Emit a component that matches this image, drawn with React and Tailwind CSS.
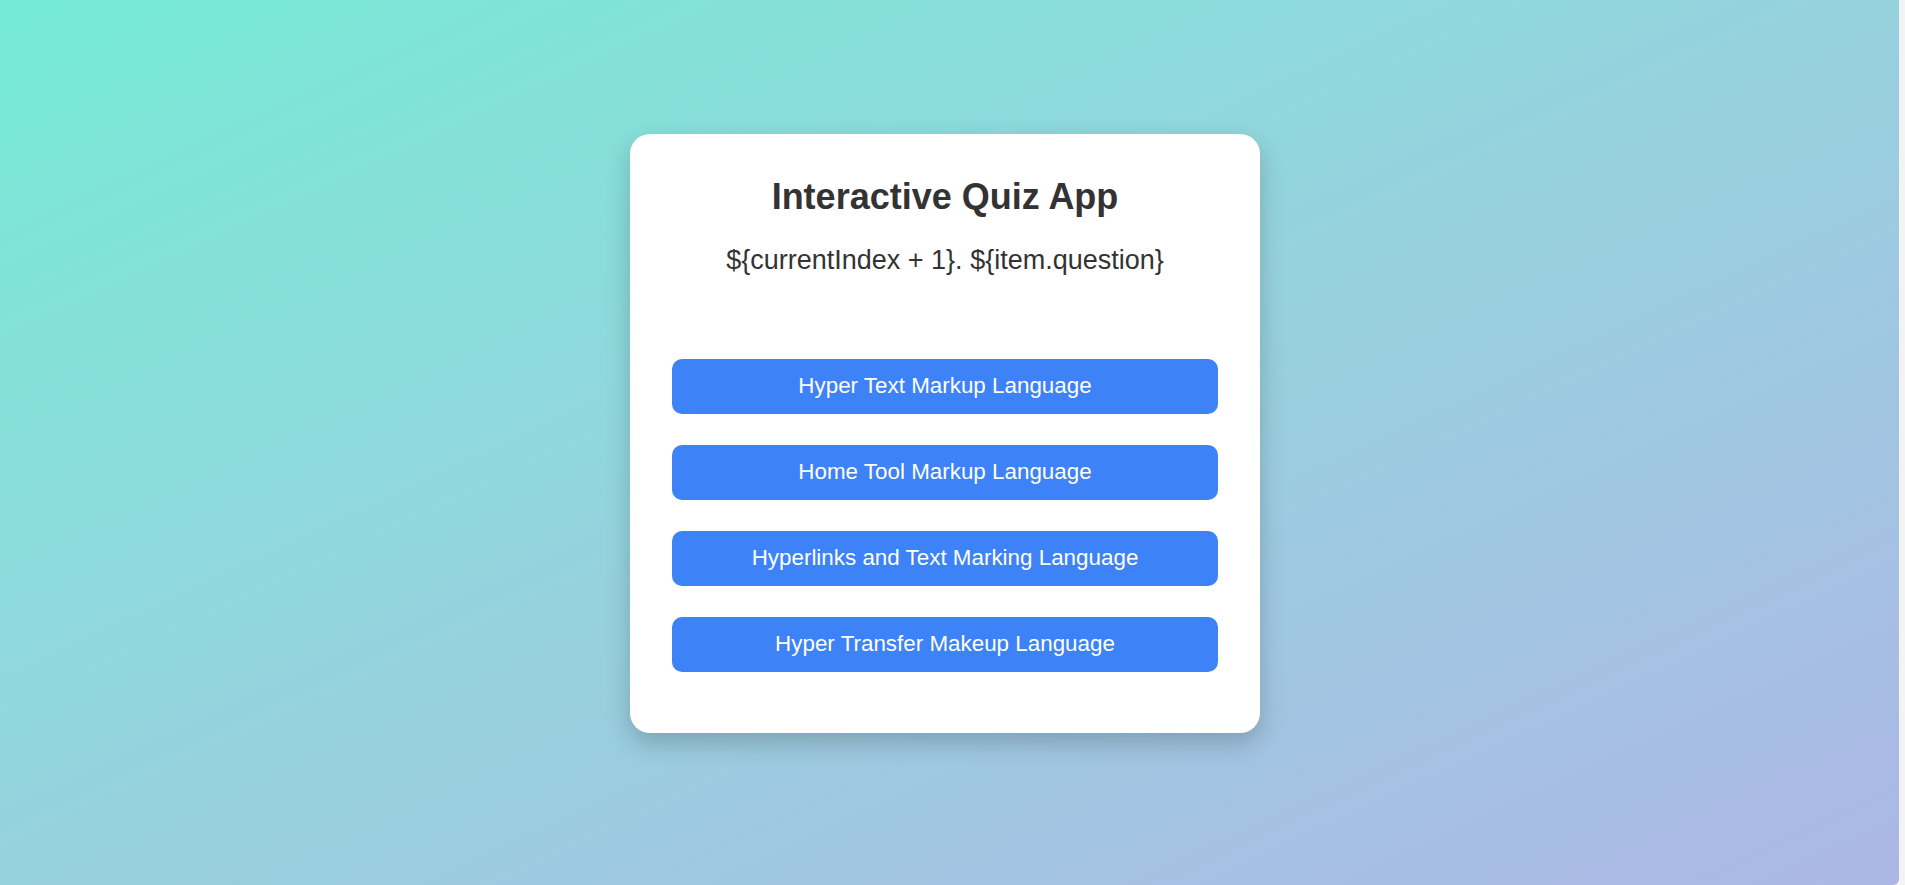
import React from "react";

const options = [
  "Hyper Text Markup Language",
  "Home Tool Markup Language",
  "Hyperlinks and Text Marking Language",
  "Hyper Transfer Makeup Language",
];

export default function App() {
  return (
    <div
      className="flex h-[885px] w-full bg-[#f3f3f3]"
      style={{ fontFamily: '"Liberation Sans", Arial, sans-serif' }}
    >
      <div className="flex h-full w-[1899px] items-center justify-center rounded-br-[6px] bg-gradient-to-br from-[#74ebd5] to-[#acb6e5] pb-[18px] pr-[9px]">
        <div className="flex w-[630px] flex-col rounded-[20px] bg-white px-[42px] pb-[61px] pt-[42px] shadow-[0_10px_25px_rgba(0,0,0,0.2)]">
          <h1 className="text-center text-[36px] font-bold leading-[41px] text-[#333333]">
            Interactive Quiz App
          </h1>
          <p className="mt-[28px] text-center text-[27px] leading-[31px] text-[#333333]">
            {"${currentIndex + 1}. ${item.question}"}
          </p>
          <div className="mt-[83px] flex flex-col gap-[31px]">
            {options.map((o) => (
              <button
                key={o}
                className="h-[55px] w-full rounded-[10px] bg-[#3d82f6] pb-[1px] text-center text-[22.4px] text-white"
              >
                {o}
              </button>
            ))}
          </div>
        </div>
      </div>
    </div>
  );
}
